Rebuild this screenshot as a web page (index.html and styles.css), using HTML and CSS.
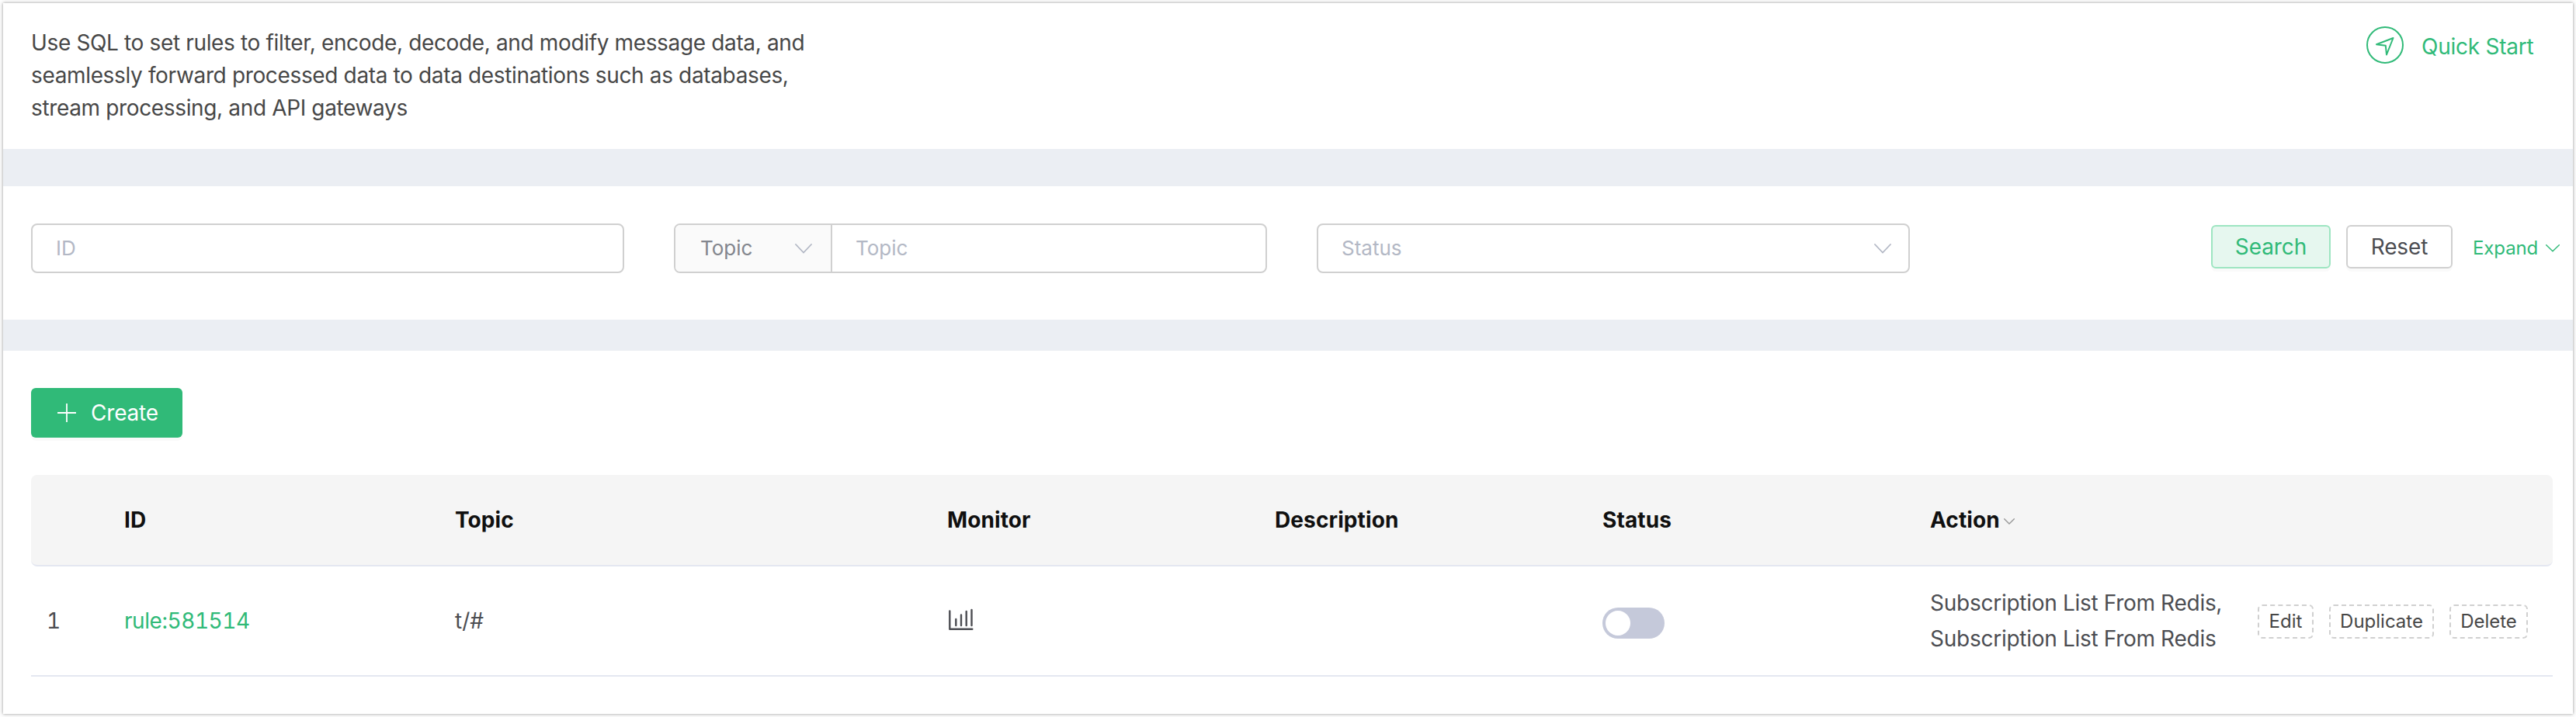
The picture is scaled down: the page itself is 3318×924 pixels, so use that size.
FILE: index.html
```
<!DOCTYPE html>
<html lang="en">
<head>
<meta charset="utf-8">
<title>Rules</title>
<link rel="stylesheet" href="styles.css">
</head>
<body>
<main class="card">
  <header class="intro">
    <p class="intro-text">Use SQL to set rules to filter, encode, decode, and modify message data, and<br>seamlessly forward processed data to data destinations such as databases,<br>stream processing, and API gateways</p>
    <a class="quick">
      <svg class="quick-icon" viewBox="0 0 48 48"><circle cx="24" cy="24" r="23"/><path d="M34.500 15L13 23.2L24.800 24.8L26 36.500Z"/></svg>
      <span>Quick Start</span>
    </a>
  </header>
  <section class="filters">
    <div class="field"><span class="placeholder">ID</span></div>
    <div class="field combo">
      <div class="prepend"><span>Topic</span><svg class="chevron" viewBox="0 0 22 13"><path d="M1 1L11 11.5L21 1"/></svg></div>
      <span class="placeholder">Topic</span>
    </div>
    <div class="field select"><span class="placeholder">Status</span><svg class="chevron" viewBox="0 0 22 13"><path d="M1 1L11 11.5L21 1"/></svg></div>
    <div class="filter-actions">
      <button class="btn search">Search</button>
      <button class="btn reset">Reset</button>
      <a class="expand"><span>Expand</span><svg viewBox="0 0 18 10"><path d="M.7.7L9 8.7L17.3.7"/></svg></a>
    </div>
  </section>
  <section class="rules">
    <button class="create"><svg viewBox="0 0 24 24"><path d="M12 .5V23.5M.5 12H23.5"/></svg><span>Create</span></button>
    <div class="table">
      <div class="row head">
        <span></span><span>ID</span><span>Topic</span><span>Monitor</span><span>Description</span><span>Status</span>
        <span class="sortable">Action<svg viewBox="0 0 14 8"><path d="M.7.7L7 6.9L13.3.7"/></svg></span><span></span>
      </div>
      <div class="row body">
        <span>1</span>
        <a class="rule">rule:581514</a>
        <span>t/#</span>
        <span><svg class="chart" viewBox="0 0 34 28"><path d="M3.3 3.5V26.7H32.3M11.3 14V22M18 8.5V22M24.7 4V22M31.5 2V22"/></svg></span>
        <span></span>
        <span><i class="switch"></i></span>
        <span class="actions">Subscription List From Redis,<br>Subscription List From Redis</span>
        <span class="ops"><button class="edit">Edit</button><button class="duplicate">Duplicate</button><button class="delete">Delete</button></span>
      </div>
    </div>
  </section>
</main>
</body>
</html>
```
FILE: styles.css
```
* { box-sizing: border-box; }
body {
  margin: 0;
  padding: 4px;
  height: 924px;
  overflow: hidden;
  background: #fdfdfd;
  color: #4c4d52;
  font: 28px/42px Inter, "Liberation Sans", sans-serif;
}
button { font: inherit; letter-spacing: inherit; margin: 0; padding: 0; white-space: nowrap; }
svg { display: block; flex: none; fill: none; stroke: currentColor; stroke-linecap: round; }
.card {
  display: flex;
  flex-direction: column;
  width: 3310px;
  height: 916px;
  background: #ebeef3;
  box-shadow: 0 0 4px rgba(0, 0, 0, .42);
}
.intro {
  display: flex;
  justify-content: space-between;
  height: 188px;
  padding: 30px 50px 0 36px;
  background: #fff;
}
.intro-text { margin: 0; color: #474747; letter-spacing: -.355px; white-space: nowrap; }
.quick { display: flex; height: 48px; gap: 23px; color: #30ba78; letter-spacing: -.25px; white-space: nowrap; }
.quick span { width: 145px; line-height: 52px; }
.quick-icon { width: 48px; height: 48px; stroke-width: 2; stroke-linejoin: round; }

.filters {
  display: flex;
  height: 172px;
  margin-top: 48px;
  padding: 48px 17px 0 36px;
  gap: 64px;
  background: #fff;
}
.field {
  display: flex;
  align-items: center;
  flex: none;
  width: 764px;
  height: 64px;
  padding: 0 22px 0 30px;
  border: 2px solid #d0d0d0;
  border-radius: 8px;
  font-size: 26px;
}
.placeholder { color: #b3b8c5; }
.combo { padding-left: 0; overflow: hidden; }
.prepend {
  display: flex;
  align-items: center;
  justify-content: space-between;
  width: 202px;
  height: 60px;
  margin-right: 30px;
  padding: 0 24px 0 32px;
  border-right: 2px solid #d0d0d0;
  background: #fafafa;
  color: #83868e;
}
.select { justify-content: space-between; }
.chevron { width: 22px; height: 13px; color: #b3b8c5; stroke-width: 1.8; }
.filter-actions { display: flex; margin-left: auto; padding-top: 2px; }
.btn {
  height: 56px;
  border: 2px solid #d0d0d0;
  border-radius: 6px;
  background: #fff;
  color: #4c4d52;
  letter-spacing: -.1px;
  box-shadow: 0 4px 0 rgba(0, 0, 0, .02);
}
.search { width: 154px; border-color: #9de5c1; background: #e6f7ef; color: #30ba78; }
.reset { width: 137px; margin-left: 20px; }
.expand { display: flex; align-items: center; height: 60px; margin-left: 26px; gap: 10px; color: #30ba78; font-size: 24px; letter-spacing: -.1px; }
.expand span { width: 84px; }
.expand svg { width: 18px; height: 10px; stroke-width: 1.4; }

.rules { height: 468px; margin-top: 40px; padding: 48px 26px 0 36px; background: #fff; }
.create {
  display: flex;
  align-items: center;
  width: 195px;
  height: 64px;
  padding-left: 34px;
  gap: 19px;
  border: 0;
  border-radius: 6px;
  background: #30ba78;
  color: #fff;
  letter-spacing: -.2px;
  box-shadow: 0 4px 0 rgba(0, 0, 0, .02);
}
.create svg { width: 24px; height: 24px; stroke-width: 1.8; }
.table { margin-top: 48px; }
.row {
  display: grid;
  grid-template-columns: 100px 426px 634px 422px 422px 422px 422px 400px;
  align-items: center;
  border-bottom: 2px solid #e4e7f1;
}
.row > * { padding-left: 20px; white-space: nowrap; }
.head { height: 118px; border-radius: 8px; background: #f5f5f5; color: #101010; font-weight: 700; letter-spacing: .1px; }
.sortable { display: flex; align-items: center; gap: 5px; }
.sortable svg { width: 14px; height: 8px; color: #999; stroke-width: 1.4; margin-top: 3px; }
.body { height: 142px; font-variant-numeric: tabular-nums; }
.rule { color: #30ba78; letter-spacing: -.45px; }
.chart { width: 34px; height: 28px; margin-bottom: 4px; stroke-width: 2.4; stroke-linejoin: round; }
.switch { display: block; width: 80px; height: 40px; margin-top: 6px; padding: 4px; border-radius: 20px; background: #c5c9da; }
.switch::before { content: ""; display: block; width: 32px; height: 32px; border-radius: 50%; background: #fff; }
.actions { line-height: 46px; letter-spacing: -.25px; }
.ops { display: flex; gap: 20px; padding-top: 2px; }
.ops button {
  height: 44px;
  border: 2px dashed #d0d0d0;
  border-radius: 6px;
  background: #fff;
  color: #474747;
  font-size: 24px;
  line-height: 40px;
}
.ops .edit { width: 72px; }
.ops .duplicate { width: 135px; }
.ops .delete { width: 101px; }
```
